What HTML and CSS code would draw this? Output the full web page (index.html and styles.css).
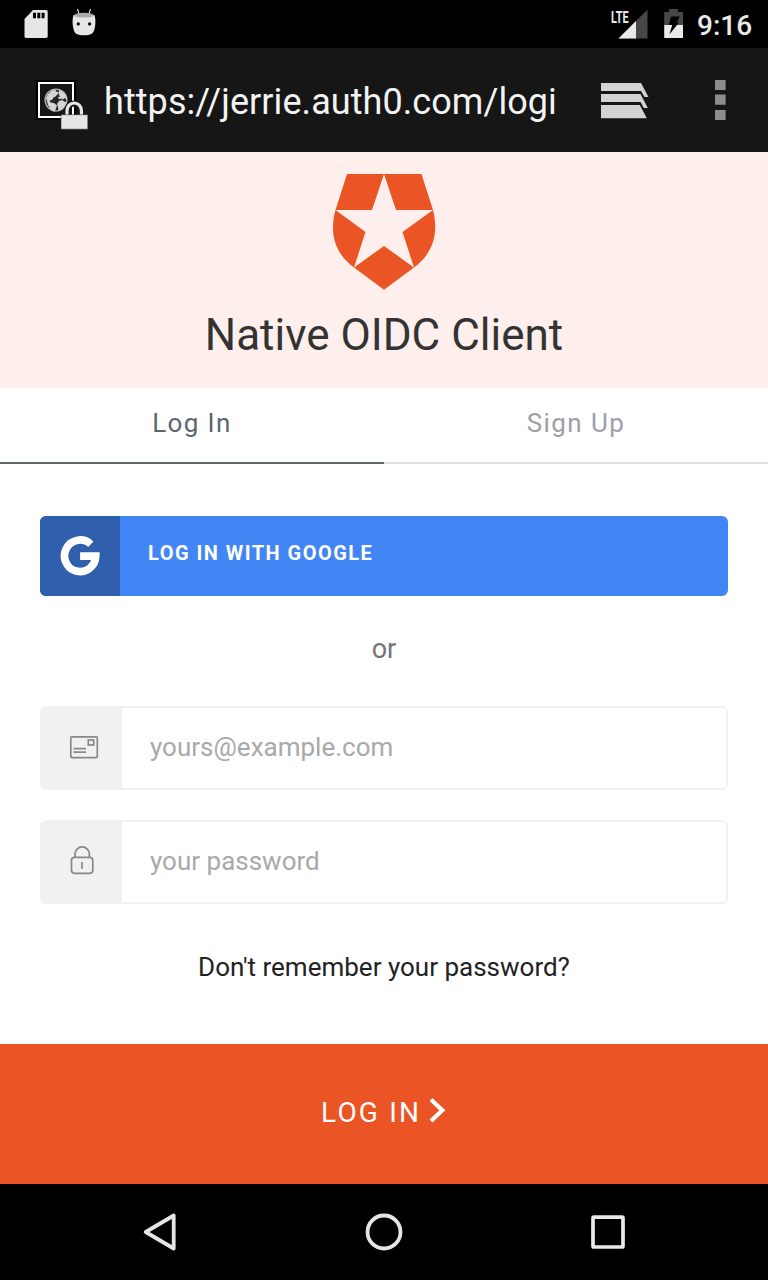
FILE: index.html
```
<!DOCTYPE html>
<html lang="en">
<head>
<meta charset="utf-8">
<title>Native OIDC Client</title>
<link rel="stylesheet" href="styles.css">
</head>
<body>
<header class="status">
  <svg class="status-sd" width="24" height="30" viewBox="24 9 24 30"><path fill="#e6e6e6" d="M33 10h13q1.700 0 1.700 1.700v24.600q0 1.700-1.700 1.700h-20q-1.500 0-1.500-1.700v-17.300z"/><path d="M33 12.700h3v5.600h-3zM37.300 12.700h3v5.600h-3zM41.600 12.700h3v5.600h-3z"/></svg>
  <svg class="status-droid" width="26" height="30" viewBox="71 7 26 30"><path d="M77.500 9l1.500 5M90.500 9l-1.500 5" stroke="#e6e6e6" stroke-width="1.100"/><path fill="#e6e6e6" d="M73.500 15h21c1.300 4 1.200 9.500 0 14-1 5-4 6.300-10.500 6.300s-9.500-1.300-10.500-6.300c-1.200-4.500-1.300-10 0-14z"/><ellipse cx="84" cy="15.200" rx="9.700" ry="2.400" fill="#aaa"/><circle cx="78.300" cy="23.900" r="1.600"/><circle cx="89.600" cy="23.900" r="1.600"/></svg>
  <div class="signal">
    <svg width="30" height="30" viewBox="618 9 30 30"><path fill="#474747" d="M647.500 9.500v29h-29z"/><path fill="#e9e9e9" d="M636 21v17.500h-17.500z"/></svg>
    <span class="lte">LTE</span>
  </div>
  <svg class="battery" width="20" height="30" viewBox="664 9 20 30"><path fill="#474747" d="M664.200 12h4.800v-3h9v3h5v13h-18.800z"/><path fill="#eaeaea" d="M664.200 25h18.800v13h-18.800z"/><path d="M671 16.500h8.600l-2.600 6h2l-9.600 12 2.800-9.500h-3.400z"/></svg>
  <span class="clock">9:16</span>
</header>
<div class="browser">
  <svg class="site" width="54" height="54" viewBox="36 78 54 54"><path d="M36 80h40v40h-40z"/><path fill="#161616" stroke="#fff" stroke-width="2" d="M39 83h34v34h-34z"/><circle cx="56" cy="100" r="10.900" fill="#242424" stroke="#b5b5b5" stroke-width="1.300"/><path fill="#d4d4d4" d="M46 98l2-4 4-3.500 3.500-1 .5 2 2.500.500-1 2.500-2 2-2 1-1.500 2.500-2.500.5 1 2 3.500.5 3 2.500-1 3-1.500 3.500-3.500-2-3-5zM59 90l3.500 1.500 3.500 4 .7 4-2.200-1.500-1.500 1.500-2.500-1-1.500 1-1-2 2-1-1.500-2.500zM59 101l3-1 3 2 1.500-.5-1.500 4.500-3.500 3.500-3 1.200-.5-3.700-1-3z"/><path fill="none" stroke="#161616" stroke-width="6" d="M67 114v-3a7.200 7.500 0 0 1 14.400 0v3"/><path fill="none" stroke="#e6e6e6" stroke-width="3.200" d="M67 116v-5.500a7.200 7.500 0 0 1 14.400 0v5.500"/><path fill="#e6e6e6" stroke="#222" stroke-width=".5" d="M61 114.700h26.800v14.500h-26.800z"/></svg>
  <span class="url">https://jerrie.auth0.com/logi</span>
  <svg class="stack" width="50" height="38" viewBox="600 82 50 38"><path fill="#d3d3d3" d="M601 83h40l7.500 14h-4l-3.500-6h-40zM601 94h39.500l7.300 14h-4l-3.300-6h-39.500zM601 105h38.800l7 13.200h-45.800z"/></svg>
  <svg class="dots" width="11" height="40" viewBox="715 80 11 40"><path fill="#8d8d8d" d="M715 80h10.600v10h-10.600zM715 94.600h10.600v10.200h-10.600zM715 110h10.600v10h-10.600z"/></svg>
</div>
<main class="lock">
  <div class="brand">
    <svg width="104" height="117" viewBox="332 174 104 117"><path fill="#eb5424" d="M347 174h74.500l11.500 36h-37l-12-36-12 36h-36.500zM335.500 210l30 22-11.500 35.500c-19-14-25-34-18.500-57.500zM433 210l-30.500 22 11.500 35.500c19-14 25-34 19-57.500zM384 246l30 21.500-30 22.200-30-22.200z"/></svg>
    <h1 class="title">Native OIDC Client</h1>
  </div>
  <nav class="tabs"><span class="tab tab-active">Log In</span><span class="tab">Sign Up</span></nav>
  <form class="form">
    <div class="google">
      <span class="google-mark"><svg width="40" height="40" viewBox="60 536 40 40"><path fill="none" stroke="#fff" stroke-width="7.700" d="M90.800 544.300a15.600 15.800 0 1 0 4.900 11.900h-15.600"/></svg></span>
      <span class="google-text">LOG IN WITH GOOGLE</span>
    </div>
    <p class="or">or</p>
    <div class="field">
      <span class="field-icon"><svg width="30" height="26" viewBox="69 734 30 26" fill="none" stroke="#888" stroke-width="1.700"><rect x="70.800" y="736.800" width="26.500" height="20.800" rx="1"/><rect x="88.300" y="740" width="5.400" height="5"/><path d="M73.500 748.600h12.500M73.500 752.200h12.500"/></svg></span>
      <span class="field-text">yours@example.com</span>
    </div>
    <div class="field">
      <span class="field-icon field-icon-pw"><svg width="26" height="30" viewBox="69 845 26 30" fill="none" stroke="#888" stroke-width="1.700"><rect x="71.500" y="857.300" width="21.300" height="16" rx="3"/><path d="M75 857v-2.800a7.200 7.300 0 0 1 14.400 0v2.800M82 862v7"/></svg></span>
      <span class="field-text">your password</span>
    </div>
    <p class="forgot">Don't remember your password?</p>
  </form>
  <div class="submit"><span class="submit-text">LOG IN</span><svg width="18" height="26" viewBox="429 1097 18 26"><path fill="none" stroke="#fff" stroke-width="4.200" d="M431 1099.500l11.300 10.700-11.300 10.700"/></svg></div>
</main>
<footer class="nav">
  <svg width="36" height="40" viewBox="142 1212 36 40"><path fill="none" stroke="#e6e6e6" stroke-width="3.800" stroke-linejoin="round" d="M173.700 1215.500v33l-28-16.500z"/></svg>
  <svg width="38" height="38" viewBox="365 1213 38 38"><circle cx="384" cy="1232" r="16.500" fill="none" stroke="#e6e6e6" stroke-width="3.800"/></svg>
  <svg width="34" height="34" viewBox="591 1215 34 34"><rect x="593" y="1217.200" width="30" height="29.800" rx="1" fill="none" stroke="#e9e9e9" stroke-width="3.700"/></svg>
</footer>
</body>
</html>
```
FILE: styles.css
```
* { box-sizing: border-box; }
body {
  margin: 0;
  width: 768px;
  height: 1280px;
  overflow: hidden;
  background: #fff;
  font-family: Roboto, "Liberation Sans", sans-serif;
}
svg { display: block; flex: none; }
p, h1 { margin: 0; font-weight: 400; }
.status {
  display: flex;
  height: 48px;
  padding: 9px 0 0 24px;
  background: #000;
}
.status-droid { margin: -2px 0 0 23px; }
.signal { position: relative; margin-left: 521px; }
.lte {
  position: absolute;
  left: -7px;
  top: -1px;
  color: #e9e9e9;
  font-size: 17px;
  line-height: 18px;
  font-weight: 700;
  transform: scaleX(.64);
  transform-origin: left;
}
.battery { margin-left: 16px; }
.clock {
  margin-left: 13px;
  color: #e9e9e9;
  font-size: 28px;
  line-height: 33px;
  font-weight: 500;
}
.browser {
  display: flex;
  height: 104px;
  padding: 30px 0 0 36px;
  background: #161616;
}
.url {
  width: 454px;
  margin-left: 14px;
  overflow: hidden;
  white-space: nowrap;
  color: #f3f3f3;
  font-size: 36px;
  line-height: 48px;
  letter-spacing: .07px;
}
.stack { margin: 4px 0 0 42px; }
.dots { margin: 2px 0 0 65px; }
.brand {
  display: flex;
  flex-direction: column;
  align-items: center;
  height: 236px;
  padding-top: 22px;
  background: #feefec;
}
.title {
  margin-top: 18px;
  color: #333;
  font-size: 44px;
  line-height: 52px;
}
.tabs { display: flex; height: 76px; }
.tab {
  flex: 1;
  padding-top: 19px;
  border-bottom: 2px solid #dedede;
  color: #9ca0a8;
  font-size: 26px;
  line-height: 32px;
  letter-spacing: 1.4px;
  text-align: center;
}
.tab-active { border-color: #5c666f; color: #5c666f; }
.form { height: 580px; padding: 52px 40px 0; }
.google {
  display: flex;
  height: 80px;
  overflow: hidden;
  border-radius: 6px;
  background: #4285f4;
}
.google-mark { width: 80px; padding: 20px; background: #2f5fad; }
.google-text {
  padding: 24px 0 0 28px;
  color: #fff;
  font-size: 20px;
  line-height: 26px;
  font-weight: 700;
  letter-spacing: 1.46px;
}
.or {
  padding: 37px 0 41px;
  color: #757575;
  font-size: 27px;
  line-height: 32px;
  text-align: center;
}
.field {
  display: flex;
  height: 84px;
  margin-bottom: 30px;
  overflow: hidden;
  border: 2px solid #f1f1f1;
  border-radius: 6px;
}
.field-icon { width: 80px; padding: 26px 0 0 27px; background: #f1f1f1; }
.field-icon-pw { padding-top: 23px; }
.field-text {
  padding: 23px 0 0 28px;
  color: #a9a9a9;
  font-size: 26px;
  line-height: 32px;
}
.forgot {
  padding-top: 17px;
  color: #222;
  font-size: 26px;
  line-height: 32px;
  text-align: center;
}
.submit {
  display: flex;
  height: 140px;
  padding: 53px 0 0 321px;
  background: #eb5424;
}
.submit-text {
  width: 108px;
  color: #fff;
  font-size: 28px;
  line-height: 32px;
  letter-spacing: 2.2px;
}
.nav {
  display: flex;
  align-items: center;
  justify-content: space-between;
  height: 96px;
  padding: 0 143px 0 142px;
  background: #000;
}
.nav svg:nth-child(2) { margin-right: 1px; }
```
